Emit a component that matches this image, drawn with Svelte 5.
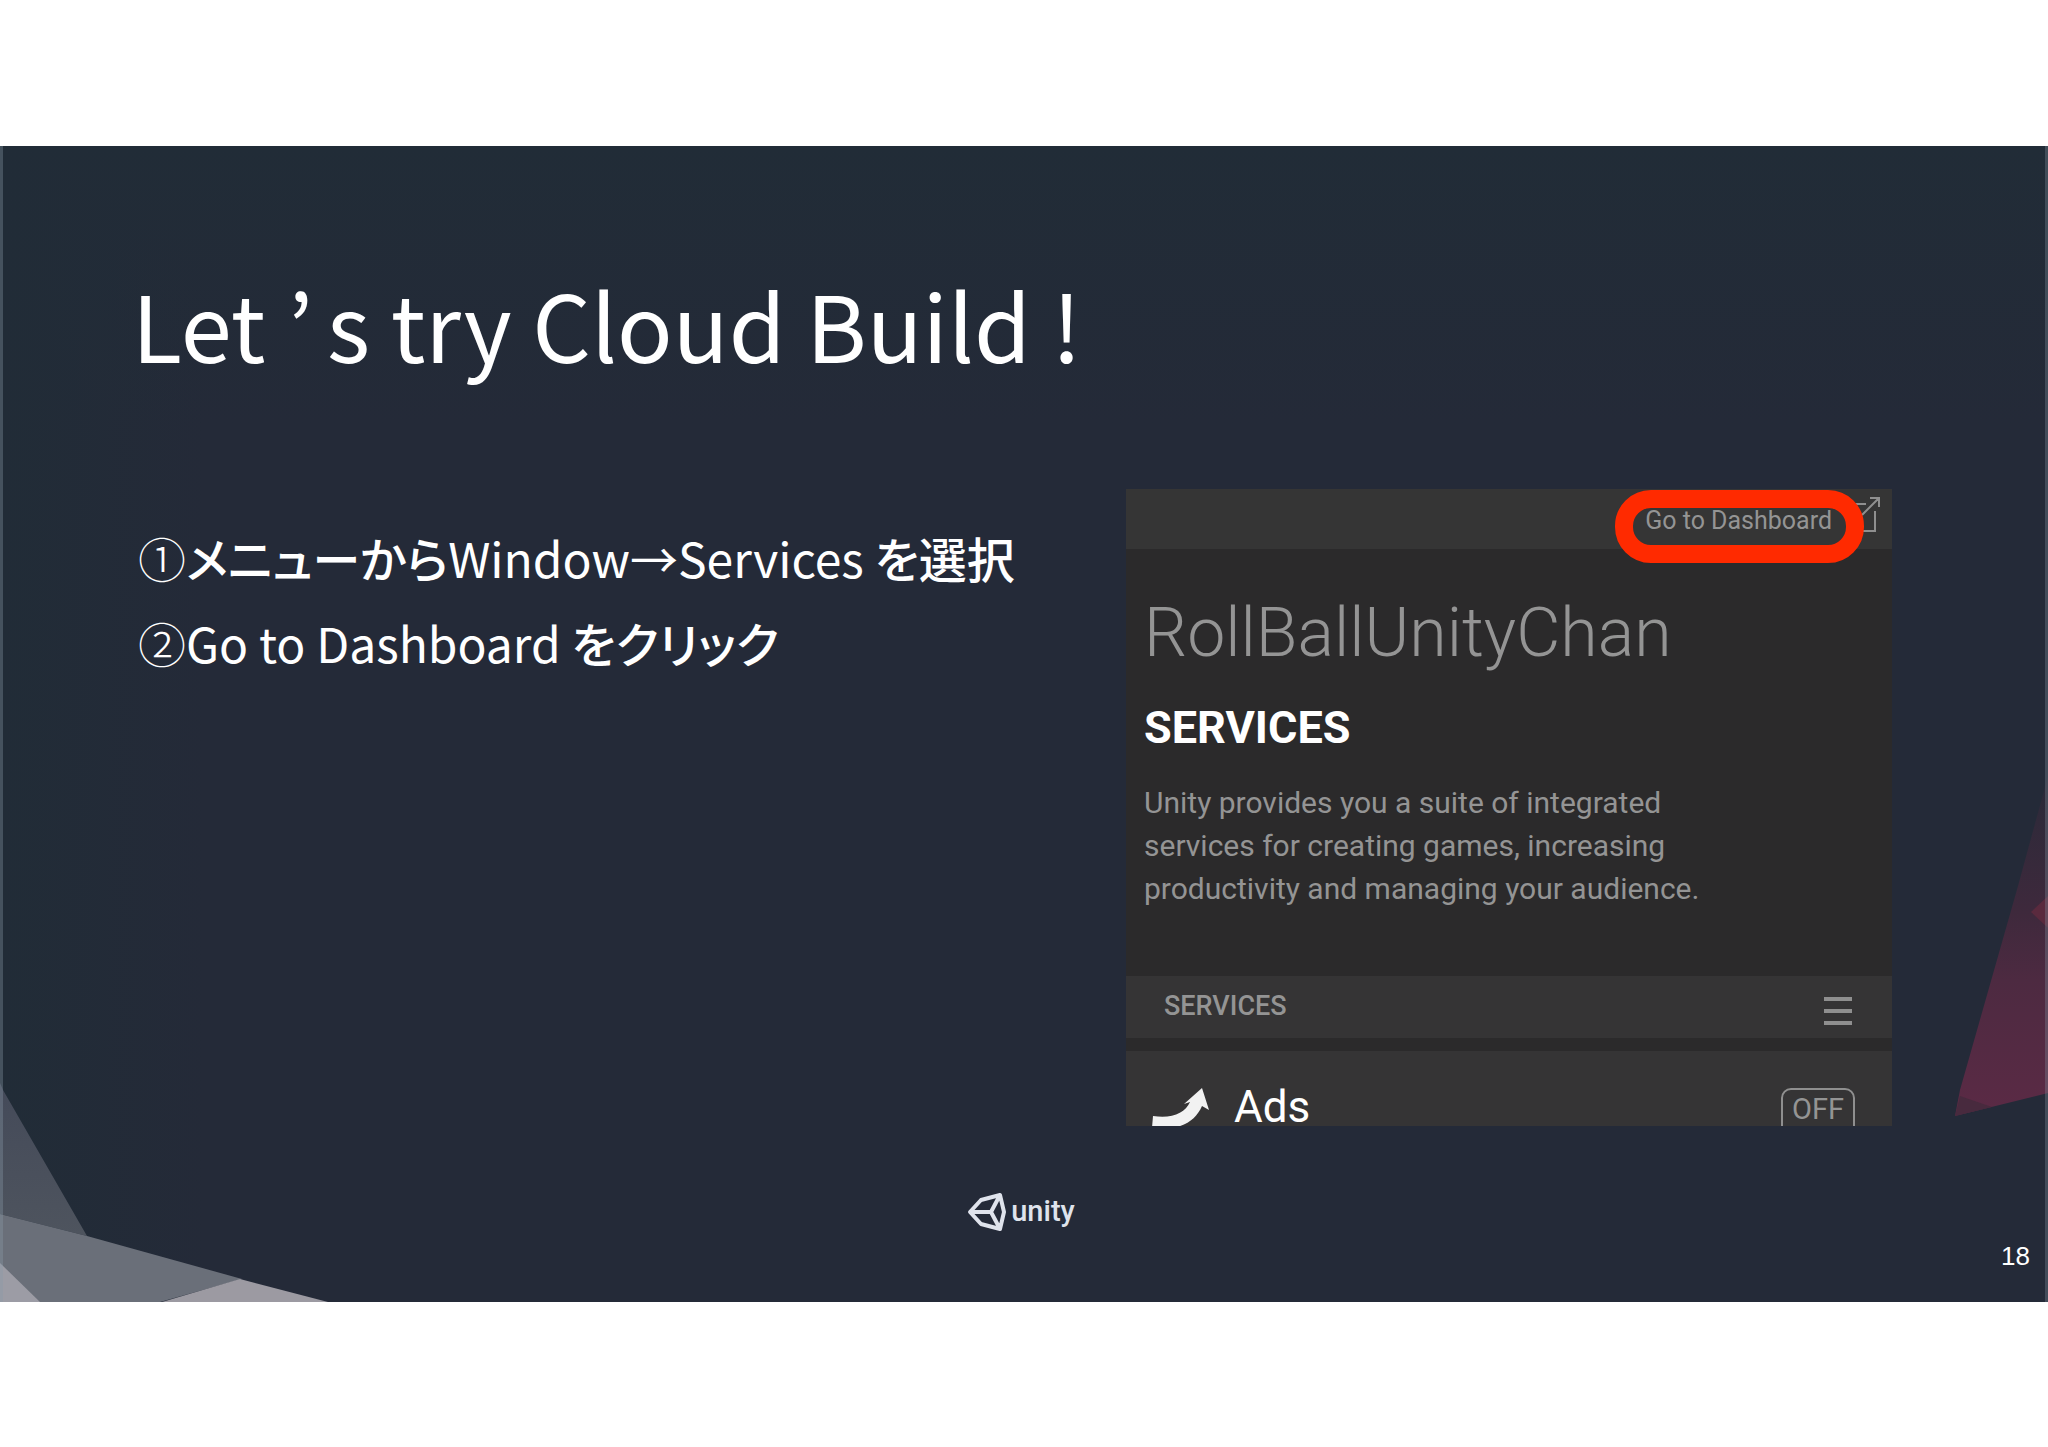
<script lang="ts">
	// kana and kanji runs are set a little heavier than the latin ones
	const steps = [
		[
			{ text: "①", weight: "light" },
			{ text: "メニューから", weight: "heavy" },
			{ text: "Window→Services ", weight: "" },
			{ text: "を選択", weight: "heavy" },
		],
		[
			{ text: "②", weight: "light" },
			{ text: "Go to Dashboard ", weight: "" },
			{ text: "をクリック", weight: "heavy" },
		],
	];
	const page = 18;
</script>

<main>
	<section class="slide">
		<svg class="backdrop" viewBox="0 0 2048 1156" preserveAspectRatio="none" aria-hidden="true">
			<defs>
				<linearGradient id="shard" x1="0" y1="0" x2="0" y2="1">
					<stop offset="0" stop-color="#2a2a39" />
					<stop offset="0.4" stop-color="#3e293c" />
					<stop offset="0.6" stop-color="#4d2a41" />
					<stop offset="1" stop-color="#5b2a45" />
				</linearGradient>
				<linearGradient id="slate" x1="0" y1="0" x2="0" y2="1">
					<stop offset="0" stop-color="#444a59" />
					<stop offset="1" stop-color="#4e545e" />
				</linearGradient>
			</defs>
			<polygon points="2048,630 2018,740 1960,944 1955,970 2048,947" fill="url(#shard)" />
			<polygon points="1960,950 1955,970 1992,961" fill="#482a3e" />
			<polygon points="2048,750 2031,766 2048,782" fill="#5a2a3e" />
			<polygon points="0,937 3,944 87,1090 0,1068" fill="url(#slate)" />
			<polygon points="0,1068 87,1090 242,1133 160,1156 0,1156" fill="#6a6f79" />
			<polygon points="0,1117 40,1156 0,1156" fill="#9c9ca5" />
			<polygon points="240,1133 328,1156 162,1156" fill="#9c9aa2" />
			<rect width="3" height="1156" fill="#8a9aa8" opacity="0.35" />
			<rect x="2045" width="3" height="1156" fill="#8a9aa8" opacity="0.3" />
		</svg>

		<h1>Let<span class="apostrophe">’</span>s try Cloud Build !</h1>

		<div class="content">
			<div class="steps">
				{#each steps as step}
					<p>{#each step as run}<span class={run.weight}>{run.text}</span>{/each}</p>
				{/each}
			</div>

			<article class="panel">
				<header class="topbar">
					<a href="#dashboard">
						<span class="label">Go to Dashboard<span class="ring"></span></span>
						<svg width="40" height="40" viewBox="0 0 40 40" aria-hidden="true">
							<path d="M24 9H8V36H33V16M20 20L37 3M28 3H37V12" />
						</svg>
					</a>
				</header>

				<div class="intro">
					<h2>RollBallUnityChan</h2>
					<h3>SERVICES</h3>
					<p>
						Unity provides you a suite of integrated<br />
						services for creating games, increasing<br />
						productivity and managing your audience.
					</p>
				</div>

				<div class="listbar">
					<h4>SERVICES</h4>
					<button class="menu" aria-label="Menu">
						<span></span><span></span><span></span>
					</button>
				</div>

				<div class="service">
					<svg width="58" height="42" viewBox="0 0 58 42" aria-hidden="true">
						<path d="M1 28C20 31 33 25 38 14L32 16L50 0L57 22L50 18C43 34 28 43 0 40Z" />
					</svg>
					<span class="name">Ads</span>
					<button class="toggle" aria-pressed="false">OFF</button>
				</div>
			</article>
		</div>

		<footer>
			<div class="logo">
				<svg width="40" height="42" viewBox="0 0 40 42" aria-hidden="true">
					<path d="M3 21L14 9L33 4L37 21L33 38L14 33ZM3 21H24M24 21L33 4M24 21L33 38" />
				</svg>
				<span>unity</span>
			</div>
			<span class="page">{page}</span>
		</footer>
	</section>
</main>

<style>
	:global(body) {
		margin: 0;
		background: #fff;
	}

	main {
		min-height: 100vh;
		display: flex;
		flex-direction: column;
		justify-content: center;
	}

	.slide {
		position: relative;
		box-sizing: border-box;
		display: flex;
		flex-direction: column;
		padding: 117px 18px 30px;
		background:
			linear-gradient(to right, #212c37, transparent 10%),
			linear-gradient(to bottom, #212c37, #242a38 24%);
		color: #fff;
		font-family: "Noto Sans CJK JP", sans-serif;
	}

	.backdrop {
		position: absolute;
		inset: 0;
		width: 100%;
		height: 100%;
	}

	h1,
	h2,
	h3,
	h4,
	p {
		margin: 0;
		font-weight: 400;
	}

	h1 {
		position: relative;
		padding-left: 114px;
		font-size: 92px;
		line-height: 120px;
	}

	.apostrophe {
		margin: 0 14px 0 22px;
	}

	.content {
		position: relative;
		display: grid;
		grid-template-columns: 988fr 766fr;
		align-items: start;
		margin-top: 106px;
		padding: 0 138px 0 120px;
	}

	.steps {
		padding-top: 26px;
		font-size: 48px;
		line-height: 85px;
		font-feature-settings: "palt";
	}

	.light {
		font-weight: 300;
	}

	.heavy {
		font-weight: 500;
	}

	.panel {
		background: #2b2a2b;
		color: #949494;
		font-family: Roboto, sans-serif;
	}

	.topbar {
		display: flex;
		justify-content: flex-end;
		height: 60px;
		padding-right: 10px;
		background: #353535;
	}

	.topbar a {
		display: flex;
		align-items: center;
		gap: 10px;
		color: inherit;
		font-size: 25px;
		line-height: 32px;
		text-decoration: none;
	}

	.topbar svg {
		margin-bottom: 8px;
		fill: none;
		stroke: #8f8f8f;
		stroke-width: 2;
	}

	.label {
		position: relative;
		padding-top: 5px;
	}

	.ring {
		position: absolute;
		inset: -10px -32px -26px -30px;
		z-index: 1;
		border: 18px solid #ff2a00;
		border-radius: 36px;
	}

	.intro {
		padding: 44px 18px 66px;
	}

	h2 {
		font-size: 68px;
		font-weight: 300;
		line-height: 80px;
	}

	h3 {
		margin-top: 27px;
		color: #fff;
		font-size: 45px;
		font-weight: 700;
		line-height: 56px;
	}

	.intro p {
		margin-top: 25px;
		font-size: 30px;
		line-height: 43px;
	}

	.listbar {
		display: flex;
		align-items: center;
		justify-content: space-between;
		height: 62px;
		padding: 0 40px 0 38px;
		background: #353435;
	}

	h4 {
		padding-bottom: 2px;
		font-size: 27px;
		font-weight: 500;
		line-height: 32px;
	}

	.menu {
		display: flex;
		flex-direction: column;
		gap: 8px;
		padding: 8px 0 0;
		border: 0;
		background: none;
	}

	.menu span {
		width: 28px;
		height: 4px;
		background: #8f8f8f;
	}

	.service {
		display: flex;
		align-items: flex-start;
		height: 75px;
		box-sizing: border-box;
		margin-top: 13px;
		padding: 37px 37px 0 26px;
		overflow: hidden;
		background: #353435;
	}

	.service svg {
		fill: #f2f2f2;
	}

	.name {
		flex: 1;
		margin-left: 24px;
		color: #fff;
		font-size: 44px;
		line-height: 38px;
	}

	.toggle {
		display: flex;
		align-items: flex-start;
		height: 56px;
		padding: 5px 9px 0;
		border: 2px solid #8f8f8f;
		border-radius: 10px;
		background: none;
		color: inherit;
		font-family: inherit;
		font-size: 29px;
		line-height: 28px;
	}

	footer {
		position: relative;
		display: grid;
		grid-template-columns: 1fr auto 1fr;
		margin-top: 65px;
	}

	.logo {
		grid-column: 2;
		display: flex;
		gap: 4px;
		height: 42px;
		padding-right: 6px;
		font: 500 29px/40px Roboto, sans-serif;
		color: #dfe3ec;
	}

	.logo svg {
		fill: none;
		stroke: #dfe3ec;
		stroke-width: 4;
		stroke-linejoin: round;
	}

	.page {
		margin-top: 49px;
		font: 26px/32px "Liberation Sans", sans-serif;
		text-align: right;
	}
</style>
